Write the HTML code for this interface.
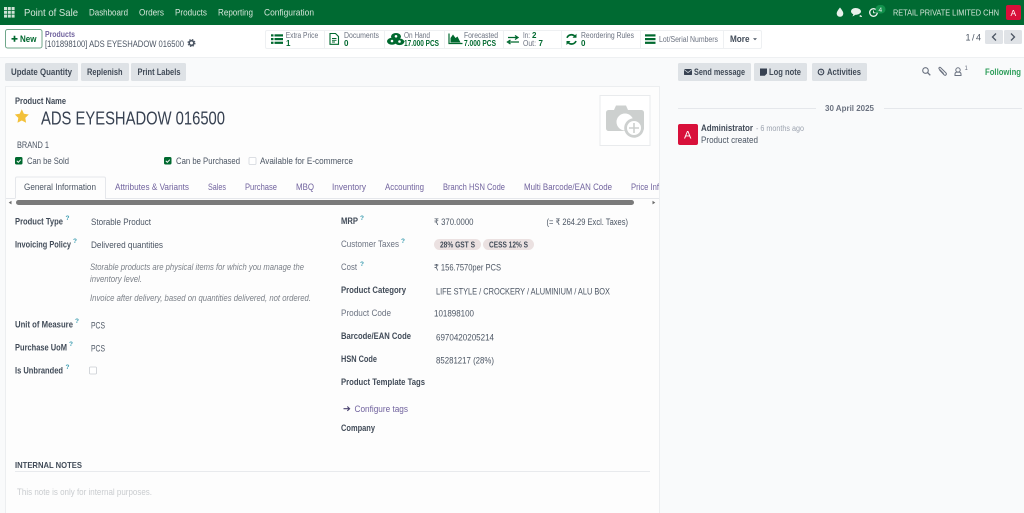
<!DOCTYPE html>
<html lang="en"><head><meta charset="utf-8"><title>Product</title>
<style>
html,body{margin:0;padding:0;width:1024px;height:513px;overflow:hidden;background:#f9fafb}
svg{display:block;filter:blur(.25px)}
text{font-family:"Liberation Sans",sans-serif;font-size:9px;fill:#4b5563}
.b{font-weight:700;fill:#414b58}
.n{fill:#d5e6da;font-size:9px}
.g{fill:#6b7280}
.s{font-size:8px;fill:#6b7280}
.gb{font-size:8px;font-weight:700;fill:#00692f}
.t{fill:#71639e;font-size:9px}
.i{font-style:italic;fill:#7b8088;font-size:9px}
.q{font-size:6.500px;font-weight:700;fill:#3a9bb0}
.bt{font-weight:700;fill:#414b58;font-size:9px}
</style></head><body>
<svg width="1024" height="513" viewBox="0 0 1024 513" xmlns="http://www.w3.org/2000/svg">
<rect width="1024" height="513" fill="#f9fafb"/>
<!-- navbar -->
<rect width="1024" height="25" fill="#006a32"/>
<g fill="#cfe3d6">
<rect x="4" y="7" width="3" height="3"/><rect x="7.800" y="7" width="3" height="3"/><rect x="11.600" y="7" width="3" height="3"/>
<rect x="4" y="10.800" width="3" height="3"/><rect x="7.800" y="10.800" width="3" height="3"/><rect x="11.600" y="10.800" width="3" height="3"/>
<rect x="4" y="14.600" width="3" height="3"/><rect x="7.800" y="14.600" width="3" height="3"/><rect x="11.600" y="14.600" width="3" height="3"/>
</g>
<text x="24" y="16" class="n" style="font-size:10.500px" textLength="54" lengthAdjust="spacingAndGlyphs">Point of Sale</text>
<text x="89" y="15.500" class="n" textLength="39" lengthAdjust="spacingAndGlyphs">Dashboard</text>
<text x="139" y="15.500" class="n" textLength="25" lengthAdjust="spacingAndGlyphs">Orders</text>
<text x="175" y="15.500" class="n" textLength="32" lengthAdjust="spacingAndGlyphs">Products</text>
<text x="218" y="15.500" class="n" textLength="35" lengthAdjust="spacingAndGlyphs">Reporting</text>
<text x="264" y="15.500" class="n" textLength="50" lengthAdjust="spacingAndGlyphs">Configuration</text>
<path d="M840 7.500c2 2.600 3.300 4.300 3.300 6a3.300 3.300 0 0 1-6.600 0c0-1.700 1.300-3.400 3.300-6z" fill="#e8f1eb"/>
<path d="M855.500 8c3 0 5.500 1.500 5.500 3.400s-2.500 3.400-5.500 3.400l-3 1.700.8-2.200c-1.400-.6-2.300-1.700-2.300-2.900 0-1.900 2-3.400 4.500-3.400z" fill="#e8f1eb"/>
<path d="M860 15c1.300.4 2 1 2 2-1 0-2-.3-2.600-.8z" fill="#e8f1eb"/>
<circle cx="873.500" cy="12.500" r="3.800" fill="none" stroke="#e8f1eb" stroke-width="1.400"/>
<path d="M873.500 10.500v2.300h2" fill="none" stroke="#e8f1eb" stroke-width=".9"/>
<rect x="875.500" y="5" width="10" height="8.500" rx="4.200" fill="#12914c"/>
<text x="878.500" y="11.800" style="font-size:6.500px;fill:#e6f3ea">4</text>
<text x="893" y="15.500" class="n" style="font-size:8.600px" textLength="106" lengthAdjust="spacingAndGlyphs">RETAIL PRIVATE LIMITED CHN</text>
<rect x="1006" y="5" width="15" height="15" rx="2" fill="#d8103a"/>
<text x="1010.500" y="15.800" style="font-size:8.500px;fill:#fff">A</text>
<!-- control panel -->
<rect y="25" width="1024" height="32" fill="#fff"/>
<rect y="57" width="1024" height="1" fill="#eef0f2"/>
<rect x="5.500" y="29.500" width="36.500" height="18.500" rx="2" fill="#fff" stroke="#6fa78a"/>
<path d="M11.500 38.800h6M14.500 35.800v6" stroke="#00692f" stroke-width="1.700"/>
<text x="20" y="41.800" class="b" style="fill:#00692f" textLength="16.500" lengthAdjust="spacingAndGlyphs">New</text>
<text x="45" y="37" class="t" style="font-weight:700;font-size:8px" textLength="30" lengthAdjust="spacingAndGlyphs">Products</text>
<text x="45" y="46.800" textLength="139" lengthAdjust="spacingAndGlyphs">[101898100] ADS EYESHADOW 016500</text>
<circle cx="191.500" cy="43" r="2.300" fill="none" stroke="#4b5563" stroke-width="1.600"/>
<circle cx="191.500" cy="43" r="3.500" fill="none" stroke="#4b5563" stroke-width="1" stroke-dasharray="1.500 1.300"/>
<!-- stat buttons -->
<rect x="265.500" y="30.500" width="496" height="18" rx="1.500" fill="#fff" stroke="#eef0f2"/>
<g stroke="#eef0f2"><path d="M324.500 30v19M384.500 30v19M444.500 30v19M503.500 30v19M561.500 30v19M640.500 30v19M723.500 30v19"/></g>
<g fill="#00692f">
<rect x="271" y="34.300" width="2.500" height="2.200"/><rect x="274.500" y="34.300" width="8.500" height="2.200"/>
<rect x="271" y="38" width="2.500" height="2.200"/><rect x="274.500" y="38" width="8.500" height="2.200"/>
<rect x="271" y="41.700" width="2.500" height="2.200"/><rect x="274.500" y="41.700" width="8.500" height="2.200"/>
</g>
<text x="285.700" y="38.200" class="s" textLength="32.500" lengthAdjust="spacingAndGlyphs">Extra Price</text>
<text x="286" y="46" class="gb">1</text>
<path d="M330 33.500h5.500l3 3v7.800h-8.500z" fill="none" stroke="#00692f" stroke-width="1.100"/>
<path d="M332 38.500h4.500M332 40.300h4.500M332 42h3" stroke="#00692f" stroke-width=".9"/>
<text x="344" y="38.200" class="s" textLength="35" lengthAdjust="spacingAndGlyphs">Documents</text>
<text x="344" y="46" class="gb">0</text>
<g fill="#00692f">
<ellipse cx="396" cy="36.500" rx="5" ry="3.500"/><ellipse cx="392" cy="41.300" rx="5" ry="3.500"/><ellipse cx="399.500" cy="41.800" rx="4.800" ry="3.300"/>
</g>
<g fill="#fff"><circle cx="396" cy="36.300" r="1.300"/><circle cx="392" cy="41" r="1.300"/><circle cx="399.500" cy="41.500" r="1.300"/></g>
<text x="404" y="38.200" class="s" textLength="26" lengthAdjust="spacingAndGlyphs">On Hand</text>
<text x="404" y="46" class="gb" textLength="35" lengthAdjust="spacingAndGlyphs">17.000 PCS</text>
<path d="M449 33.500v10h13.500" fill="none" stroke="#00692f" stroke-width="1.200"/>
<path d="M450.500 42.500v-4.500l2.500-3.500 2.500 3.500 2-1.500 3 6z" fill="#00692f"/>
<text x="464" y="38.200" class="s" textLength="34" lengthAdjust="spacingAndGlyphs">Forecasted</text>
<text x="464" y="46" class="gb" textLength="32" lengthAdjust="spacingAndGlyphs">7.000 PCS</text>
<path d="M508 37.500h9M515 35.500l3 2-3 2M519 42h-10M510.500 40l-3 2 3 2" fill="none" stroke="#00692f" stroke-width="1.300"/>
<text x="523" y="37.800" class="s" textLength="7" lengthAdjust="spacingAndGlyphs">In:</text>
<text x="532" y="37.800" class="gb">2</text>
<text x="523" y="46" class="s" textLength="13" lengthAdjust="spacingAndGlyphs">Out:</text>
<text x="538.500" y="46" class="gb">7</text>
<path d="M567 37.800a4.700 4.700 0 0 1 8-1.300M576 41a4.700 4.700 0 0 1-8 1.300" fill="none" stroke="#00692f" stroke-width="1.700"/>
<path d="M576.500 33.800v4h-4zM566.500 45v-4h4z" fill="#00692f"/>
<text x="581" y="38.200" class="s" textLength="53" lengthAdjust="spacingAndGlyphs">Reordering Rules</text>
<text x="581" y="46" class="gb">0</text>
<g fill="#00692f"><rect x="645" y="34.300" width="10.500" height="2.200"/><rect x="645" y="38" width="10.500" height="2.200"/><rect x="645" y="41.700" width="10.500" height="2.200"/></g>
<text x="659" y="41.800" class="s" textLength="59" lengthAdjust="spacingAndGlyphs">Lot/Serial Numbers</text>
<text x="730" y="41.800" class="b" textLength="19.500" lengthAdjust="spacingAndGlyphs">More</text>
<path d="M753 38.300h4l-2 2z" fill="#4b5563"/>
<!-- pager -->
<text x="965.500" y="40.500" textLength="15.500" lengthAdjust="spacing">1 / 4</text>
<rect x="985" y="30" width="18" height="14" rx="1.500" fill="#e0e3e7"/>
<rect x="1004" y="30" width="18" height="14" rx="1.500" fill="#e0e3e7"/>
<path d="M996 33.500l-3.500 3.500 3.500 3.500M1011 33.500l3.500 3.500-3.500 3.500" fill="none" stroke="#4b5563" stroke-width="1.300"/>
<!-- action buttons -->
<g fill="#dee2e6">
<rect x="5" y="63" width="73" height="18" rx="1.500"/><rect x="81" y="63" width="48" height="18" rx="1.500"/><rect x="131" y="63" width="55" height="18" rx="1.500"/>
<rect x="678" y="63" width="73" height="18" rx="1.500"/><rect x="754" y="63" width="53" height="18" rx="1.500"/><rect x="812" y="63" width="55" height="18" rx="1.500"/>
</g>
<text x="11" y="75" class="bt" textLength="61" lengthAdjust="spacingAndGlyphs">Update Quantity</text>
<text x="87" y="75" class="bt" textLength="35.500" lengthAdjust="spacingAndGlyphs">Replenish</text>
<text x="137.500" y="75" class="bt" textLength="43" lengthAdjust="spacingAndGlyphs">Print Labels</text>
<rect x="684" y="69" width="8" height="6" rx=".6" fill="#374151"/><path d="M684 69.500l4 3 4-3" fill="none" stroke="#dee2e6" stroke-width=".7"/>
<text x="694" y="75" class="bt" textLength="51" lengthAdjust="spacingAndGlyphs">Send message</text>
<path d="M760 68.500h7v5l-2.200 2.200H760z" fill="#374151"/>
<text x="769" y="75" class="bt" textLength="32" lengthAdjust="spacingAndGlyphs">Log note</text>
<circle cx="821" cy="72" r="2.800" fill="none" stroke="#374151" stroke-width="1.100"/><path d="M821 70.500v1.700h1.300" fill="none" stroke="#374151" stroke-width=".7"/>
<text x="827" y="75" class="bt" textLength="34" lengthAdjust="spacingAndGlyphs">Activities</text>
<!-- chatter top -->
<circle cx="925.500" cy="70.500" r="2.800" fill="none" stroke="#6b7280" stroke-width="1.100"/><path d="M927.500 72.500l2.800 2.800" stroke="#6b7280" stroke-width="1.300"/>
<path d="M939.500 70l4.500 4.800c1.500 1.300 3.200-.5 1.900-1.900l-5.300-5.300c-1-.9-2.300.4-1.400 1.400l4.600 4.700" fill="none" stroke="#6b7280" stroke-width="1"/>
<circle cx="958" cy="70" r="2.200" fill="none" stroke="#6b7280" stroke-width="1"/><path d="M955 75.500v-1.500c0-1.200 1-2 3-2s3 .8 3 2v1.500z" fill="none" stroke="#6b7280" stroke-width="1"/>
<text x="964.500" y="70" style="font-size:6px;fill:#6b7280">1</text>
<text x="985" y="75" class="b" style="fill:#2f9e5b" textLength="36" lengthAdjust="spacingAndGlyphs">Following</text>
<path d="M678 108.500h138M884 108.500h138" stroke="#e5e7eb"/>
<text x="825" y="111" class="b" style="font-size:8.500px;fill:#6b7280" textLength="49" lengthAdjust="spacingAndGlyphs">30 April 2025</text>
<rect x="678" y="124" width="20" height="21" rx="2" fill="#d8103a"/>
<text x="684" y="138.500" style="font-size:11px;fill:#fff">A</text>
<text x="701" y="131" class="b" textLength="52" lengthAdjust="spacingAndGlyphs">Administrator</text>
<text x="756" y="131" style="font-size:8px;fill:#9ca3af" textLength="48" lengthAdjust="spacingAndGlyphs">- 6 months ago</text>
<text x="701" y="143" textLength="57" lengthAdjust="spacingAndGlyphs">Product created</text>
<!-- sheet -->
<rect x="5.500" y="86.500" width="654" height="440" fill="#fdfdfd" stroke="#eceef0"/>
<text x="15" y="104" class="b" textLength="51" lengthAdjust="spacingAndGlyphs">Product Name</text>
<path d="M21.800 109.300l2.100 4.500 4.900.7-3.500 3.400.8 4.900-4.300-2.300-4.300 2.300.8-4.900-3.500-3.400 4.900-.7z" fill="#f3c13a"/>
<text x="41" y="124.500" style="font-size:18px;fill:#374151" textLength="184" lengthAdjust="spacingAndGlyphs">ADS EYESHADOW 016500</text>
<rect x="600" y="95.500" width="50" height="50" fill="#fff" stroke="#e9ebed"/>
<path d="M609 110h5l2-4.500h10l2 4.500h13c2 0 3 1 3 3v15c0 2-1 3-3 3h-32c-2 0-3-1-3-3v-15c0-2 1-3 3-3z" fill="#cdd0cf"/>
<circle cx="625" cy="122" r="8.500" fill="#fff"/>
<circle cx="634" cy="128" r="9.800" fill="#cdd0cf"/>
<circle cx="634" cy="128" r="7" fill="#fff"/>
<path d="M634 123v10M629 128h10" stroke="#cdd0cf" stroke-width="1.600"/>
<text x="17" y="148" textLength="32" lengthAdjust="spacingAndGlyphs">BRAND 1</text>
<g>
<rect x="15" y="157" width="7.500" height="7.500" rx="1.500" fill="#00692f"/><path d="M16.800 160.800l1.500 1.500 2.500-2.600" fill="none" stroke="#fff" stroke-width=".9"/>
<text x="27" y="164" textLength="42" lengthAdjust="spacingAndGlyphs">Can be Sold</text>
<rect x="164" y="157" width="7.500" height="7.500" rx="1.500" fill="#00692f"/><path d="M165.800 160.800l1.500 1.500 2.500-2.600" fill="none" stroke="#fff" stroke-width=".9"/>
<text x="176" y="164" textLength="64" lengthAdjust="spacingAndGlyphs">Can be Purchased</text>
<rect x="249" y="157.500" width="7" height="7" rx="1" fill="#fff" stroke="#d1d5db" stroke-width=".8"/>
<text x="260" y="164" textLength="93" lengthAdjust="spacingAndGlyphs">Available for E-commerce</text>
</g>
<!-- tabs -->
<path d="M6 198.500h9M105 198.500h554" stroke="#e5e7eb"/>
<path d="M15.500 198.500v-20a1.500 1.500 0 0 1 1.500-1.500h87a1.500 1.500 0 0 1 1.500 1.500v20" fill="#fdfdfd" stroke="#e5e7eb"/>
<text x="24" y="190" textLength="72" lengthAdjust="spacingAndGlyphs">General Information</text>
<text x="115" y="190" class="t" textLength="74" lengthAdjust="spacingAndGlyphs">Attributes &amp; Variants</text>
<text x="208" y="190" class="t" textLength="18" lengthAdjust="spacingAndGlyphs">Sales</text>
<text x="245" y="190" class="t" textLength="32" lengthAdjust="spacingAndGlyphs">Purchase</text>
<text x="296" y="190" class="t" textLength="18" lengthAdjust="spacingAndGlyphs">MBQ</text>
<text x="332" y="190" class="t" textLength="34" lengthAdjust="spacingAndGlyphs">Inventory</text>
<text x="385" y="190" class="t" textLength="39" lengthAdjust="spacingAndGlyphs">Accounting</text>
<text x="443" y="190" class="t" textLength="62" lengthAdjust="spacingAndGlyphs">Branch HSN Code</text>
<text x="524" y="190" class="t" textLength="88" lengthAdjust="spacingAndGlyphs">Multi Barcode/EAN Code</text>
<text x="631" y="190" class="t" textLength="28" lengthAdjust="spacingAndGlyphs">Price Inf</text>
<rect x="16" y="200" width="618" height="5" rx="2.500" fill="#7a7a7a"/>
<path d="M11.500 200.800v3.600l-2.800-1.800zM652.500 200.800v3.600l2.800-1.800z" fill="#6b6b6b"/>
<!-- left column -->
<text x="15" y="224.500" class="b" textLength="48" lengthAdjust="spacingAndGlyphs">Product Type</text><text x="65.500" y="220" class="q">?</text>
<text x="91" y="225" textLength="60" lengthAdjust="spacingAndGlyphs">Storable Product</text>
<text x="15" y="247.500" class="b" textLength="56" lengthAdjust="spacingAndGlyphs">Invoicing Policy</text><text x="73" y="243" class="q">?</text>
<text x="91" y="248" textLength="72" lengthAdjust="spacingAndGlyphs">Delivered quantities</text>
<text x="90" y="270" class="i" textLength="214" lengthAdjust="spacingAndGlyphs">Storable products are physical items for which you manage the</text>
<text x="90" y="282" class="i" textLength="52" lengthAdjust="spacingAndGlyphs">inventory level.</text>
<text x="90" y="301" class="i" textLength="221" lengthAdjust="spacingAndGlyphs">Invoice after delivery, based on quantities delivered, not ordered.</text>
<text x="15" y="327.500" class="b" textLength="58" lengthAdjust="spacingAndGlyphs">Unit of Measure</text><text x="75" y="323" class="q">?</text>
<text x="91" y="328.500" textLength="14" lengthAdjust="spacingAndGlyphs">PCS</text>
<text x="15" y="350.500" class="b" textLength="52" lengthAdjust="spacingAndGlyphs">Purchase UoM</text><text x="69" y="346" class="q">?</text>
<text x="91" y="351.500" textLength="14" lengthAdjust="spacingAndGlyphs">PCS</text>
<text x="15" y="373.500" class="b" textLength="48" lengthAdjust="spacingAndGlyphs">Is Unbranded</text><text x="65.500" y="369" class="q">?</text>
<rect x="89.500" y="367" width="7" height="7" rx="1" fill="#fff" stroke="#c9cdd2" stroke-width=".8"/>
<!-- right column -->
<text x="341" y="224" class="b" textLength="17" lengthAdjust="spacingAndGlyphs">MRP</text><text x="360" y="220" class="q">?</text>
<text x="434" y="225" textLength="39.500" lengthAdjust="spacingAndGlyphs">₹ 370.0000</text>
<text x="546.500" y="225" textLength="81.500" lengthAdjust="spacingAndGlyphs">(= ₹ 264.29 Excl. Taxes)</text>
<text x="341" y="247" class="g" textLength="58" lengthAdjust="spacingAndGlyphs">Customer Taxes</text><text x="401" y="243" class="q">?</text>
<rect x="434" y="239" width="47" height="11" rx="5.500" fill="#ebe1e1"/>
<rect x="483" y="239" width="51" height="11" rx="5.500" fill="#ebe1e1"/>
<text x="440" y="247.500" class="b" style="font-size:8px" textLength="35" lengthAdjust="spacingAndGlyphs">28% GST S</text>
<text x="489" y="247.500" class="b" style="font-size:8px" textLength="39" lengthAdjust="spacingAndGlyphs">CESS 12% S</text>
<text x="341" y="270" class="g" textLength="16" lengthAdjust="spacingAndGlyphs">Cost</text><text x="360" y="266" class="q">?</text>
<text x="434" y="270.500" textLength="67" lengthAdjust="spacingAndGlyphs">₹ 156.7570per PCS</text>
<text x="341" y="293" class="b" textLength="65" lengthAdjust="spacingAndGlyphs">Product Category</text>
<text x="436" y="294.500" textLength="174" lengthAdjust="spacingAndGlyphs">LIFE STYLE / CROCKERY / ALUMINIUM / ALU BOX</text>
<text x="341" y="316" class="g" textLength="50" lengthAdjust="spacingAndGlyphs">Product Code</text>
<text x="434" y="316.500" textLength="40" lengthAdjust="spacingAndGlyphs">101898100</text>
<text x="341" y="339" class="b" textLength="70" lengthAdjust="spacingAndGlyphs">Barcode/EAN Code</text>
<text x="436" y="340.500" textLength="58" lengthAdjust="spacingAndGlyphs">6970420205214</text>
<text x="341" y="362" class="b" textLength="36" lengthAdjust="spacingAndGlyphs">HSN Code</text>
<text x="436" y="363.500" textLength="58" lengthAdjust="spacingAndGlyphs">85281217 (28%)</text>
<text x="341" y="385" class="b" textLength="84" lengthAdjust="spacingAndGlyphs">Product Template Tags</text>
<path d="M343.500 408.700h6M347.300 406.500l2.300 2.200-2.300 2.200" fill="none" stroke="#4b4470" stroke-width="1.100"/>
<text x="354.500" y="412" class="t" textLength="53.500" lengthAdjust="spacingAndGlyphs">Configure tags</text>
<text x="341" y="431" class="b" textLength="34" lengthAdjust="spacingAndGlyphs">Company</text>
<text x="15" y="468" class="b" style="font-size:8.500px" textLength="67" lengthAdjust="spacingAndGlyphs">INTERNAL NOTES</text>
<path d="M15 471.500h635" stroke="#e8eaed"/>
<text x="17" y="495" style="fill:#c9cccf" textLength="135" lengthAdjust="spacingAndGlyphs">This note is only for internal purposes.</text>
</svg>
</body></html>
